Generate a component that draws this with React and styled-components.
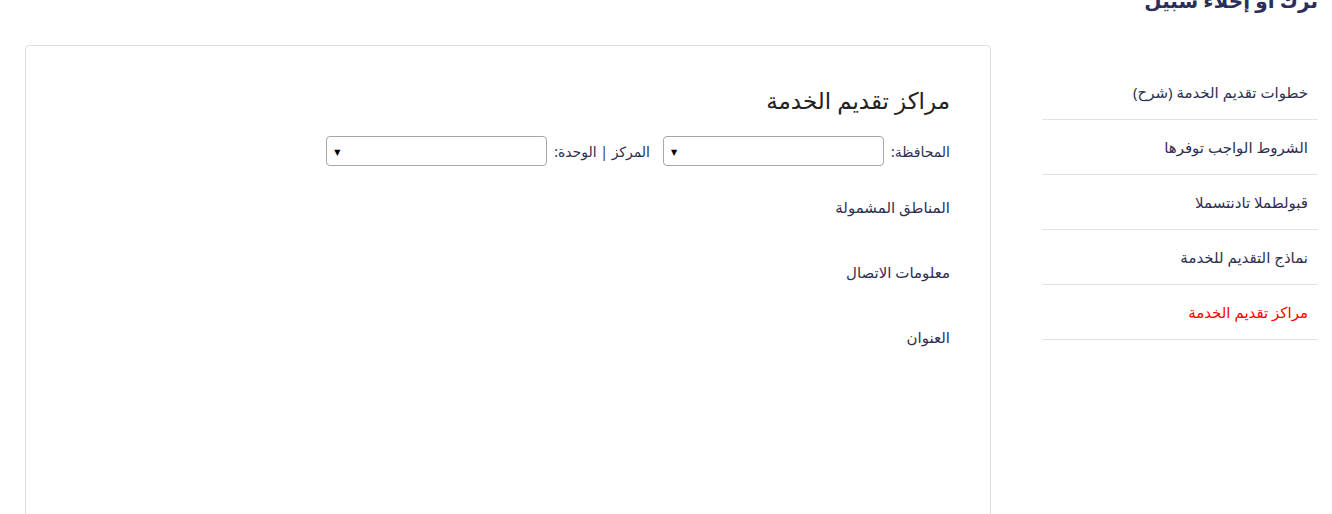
import React from "react";
import styled, { createGlobalStyle } from "styled-components";

const Global = createGlobalStyle`
  html, body { margin: 0; padding: 0; background: #fff; }
  body { font-family: "Noto Sans", "DejaVu Sans", sans-serif; color: #333; overflow: hidden; }
`;

const Page = styled.div`
  direction: rtl;
  width: 1332px;
  height: 514px;
  overflow: hidden;
  padding: 0 14px 0 0;
  box-sizing: border-box;
`;

const PageTitle = styled.h1`
  margin: -13px 0 0 0;
  height: 58px;
  font-size: 20px;
  font-weight: 700;
  color: #2c2e5a;
  line-height: 28px;
`;

const Row = styled.div`
  display: flex;
  flex-direction: row;
  gap: 51px;
  align-items: flex-start;
`;

const Sidebar = styled.ul`
  list-style: none;
  margin: 20px 0 0 0;
  padding: 0;
  width: 276px;
  flex: none;
`;

const NavItem = styled.li`
  height: 55px;
  box-sizing: border-box;
  border-bottom: 1px solid #e3e3e3;
  padding: 0 10px;
  display: flex;
  align-items: center;
  font-size: 15px;
  color: ${(p) => (p.$active ? "#ff0000" : "#2e3050")};
`;

const Card = styled.div`
  width: 966px;
  height: 500px;
  box-sizing: border-box;
  border: 1px solid #dcdcdc;
  border-radius: 4px;
  padding: 39px 40px 0 40px;
  flex: none;
`;

const CardTitle = styled.h2`
  margin: 0 0 21px 0;
  font-size: 23px;
  font-weight: 400;
  color: #222;
  line-height: 30px;
`;

const FilterRow = styled.div`
  display: flex;
  align-items: center;
  gap: 13px;
  margin-bottom: 31px;
`;

const Field = styled.label`
  display: flex;
  align-items: center;
  gap: 7px;
  font-size: 14px;
  color: #2e3050;
`;

const Select = styled.div`
  width: 221px;
  height: 30px;
  box-sizing: border-box;
  border: 1px solid #a6a6a6;
  border-radius: 4px;
  display: flex;
  align-items: center;
  justify-content: flex-end;
  padding: 0 7px;
  font-size: 8px;
  color: #000;
`;

const Section = styled.div`
  font-size: 15px;
  color: #2e3050;
  line-height: 20px;
  margin-bottom: 45px;
`;

const navItems = [
  "خطوات تقديم الخدمة (شرح)",
  "الشروط الواجب توفرها",
  "قبولطملا تادنتسملا",
  "نماذج التقديم للخدمة",
  "مراكز تقديم الخدمة",
];

export default function App() {
  return (
    <>
      <Global />
      <Page>
        <PageTitle>ترك أو إخلاء سبيل</PageTitle>
        <Row>
          <Sidebar>
            {navItems.map((t, i) => (
              <NavItem key={i} $active={i === 4}>{t}</NavItem>
            ))}
          </Sidebar>
          <Card>
            <CardTitle>مراكز تقديم الخدمة</CardTitle>
            <FilterRow>
              <Field>
                المحافظة:
                <Select>▼</Select>
              </Field>
              <Field>
                المركز | الوحدة:
                <Select>▼</Select>
              </Field>
            </FilterRow>
            <Section>المناطق المشمولة</Section>
            <Section>معلومات الاتصال</Section>
            <Section>العنوان</Section>
          </Card>
        </Row>
      </Page>
    </>
  );
}
